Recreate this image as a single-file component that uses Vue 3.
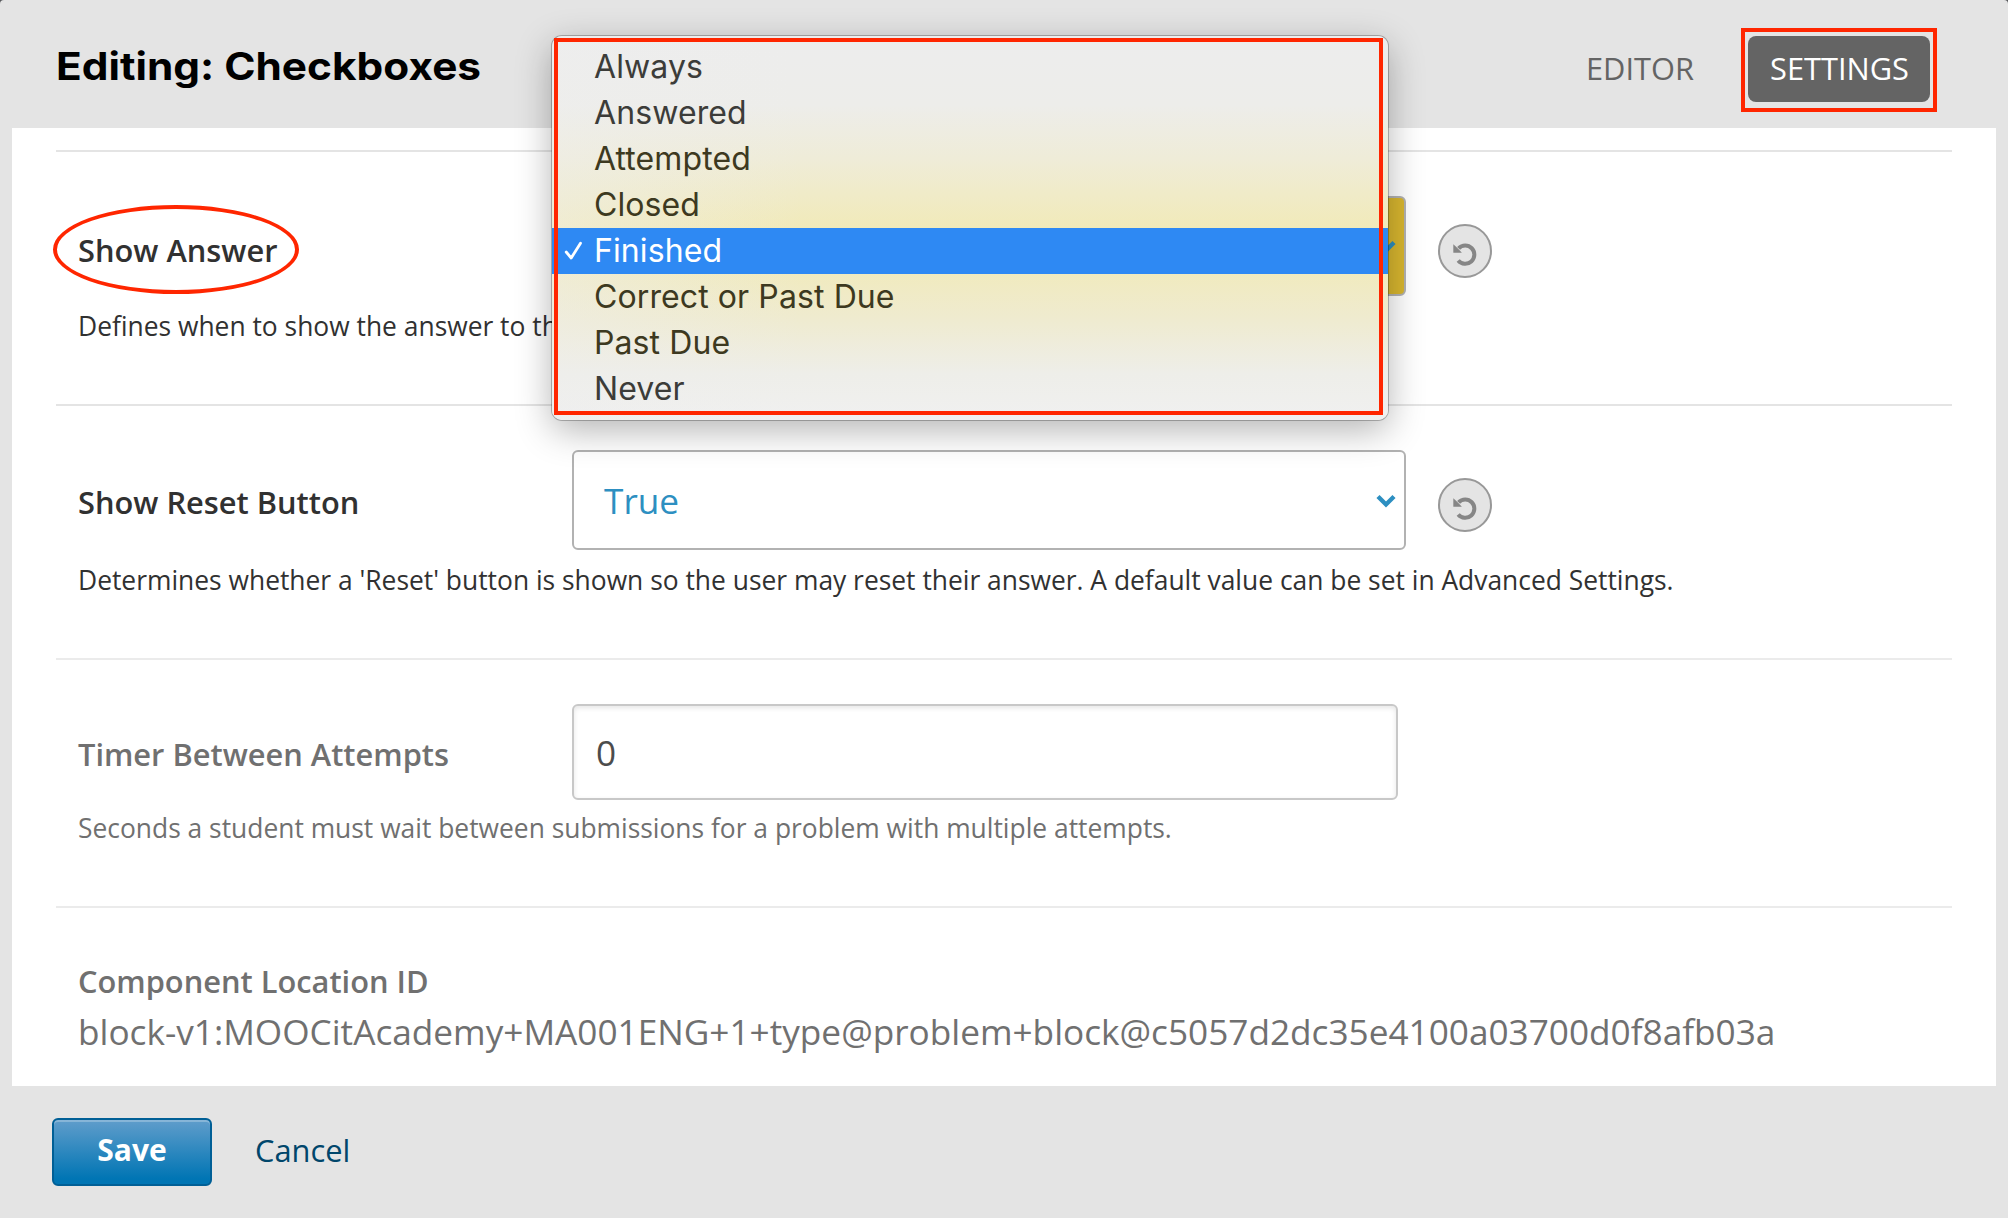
<script setup>
const options = ['Always', 'Answered', 'Attempted', 'Closed', 'Finished', 'Correct or Past Due', 'Past Due', 'Never']
const selected = 'Finished'
</script>

<template>
  <div class="modal">
    <header class="modal-header">
      <h2 class="title">Editing: Checkboxes</h2>
      <nav class="modes">
        <a class="mode">EDITOR</a>
        <a class="mode active">SETTINGS</a>
      </nav>
      <div class="mark-settings"></div>
    </header>

    <main class="panel">
      <section class="row set first">
        <div class="line">
          <label class="label">Show Answer</label>
          <div class="select changed">
            <svg class="chevron" viewBox="0 0 20 14"><path d="M2 2.5 10 10.5 18 2.5" /></svg>
          </div>
          <button class="reset"><svg viewBox="0 0 54 54"><path class="arc" d="M20.6 24.4A9.1 9.1 0 1 1 20.2 36.4" /><path class="head" d="M15.3 20.2V28.7H23.9L21.3 26 17.8 22.6Z" /></svg></button>
        </div>
        <p class="help">Defines when to show the answer to the</p>
        <div class="ring"></div>
        <ul class="menu">
          <li v-for="o in options" :key="o" :class="{ on: o === selected }">
            <svg v-if="o === selected" class="check" viewBox="0 0 20 20"><path d="M2.2 11 7.2 17 16.5 2.2" /></svg>{{ o }}
          </li>
        </ul>
      </section>

      <section class="row set second">
        <div class="line">
          <label class="label">Show Reset Button</label>
          <div class="select">
            <span>True</span>
            <svg class="chevron" viewBox="0 0 20 14"><path d="M2 2.5 10 10.5 18 2.5" /></svg>
          </div>
          <button class="reset"><svg viewBox="0 0 54 54"><path class="arc" d="M20.6 24.4A9.1 9.1 0 1 1 20.2 36.4" /><path class="head" d="M15.3 20.2V28.7H23.9L21.3 26 17.8 22.6Z" /></svg></button>
        </div>
        <p class="help">Determines whether a 'Reset' button is shown so the user may reset their answer. A default value can be set in Advanced Settings.</p>
      </section>

      <section class="row third">
        <div class="line">
          <label class="label">Timer Between Attempts</label>
          <div class="input">0</div>
        </div>
        <p class="help">Seconds a student must wait between submissions for a problem with multiple attempts.</p>
      </section>

      <section class="row location">
        <h4 class="label">Component Location ID</h4>
        <p class="locator">block-v1:MOOCitAcademy+MA001ENG+1+type@problem+block@c5057d2dc35e4100a03700d0f8afb03a</p>
      </section>
    </main>

    <footer class="actions">
      <button class="save">Save</button>
      <a class="cancel">Cancel</a>
    </footer>
  </div>
</template>

<style>
body { margin: 0; background: #55565a; }
</style>

<style scoped>
* { box-sizing: border-box; margin: 0; padding: 0; }
.modal { width: 2008px; height: 1218px; overflow: hidden; display: flex; flex-direction: column; background: #e4e4e4; border-radius: 4px 4px 0 0; font-family: "Open Sans", sans-serif; font-size: 30.8px; color: #707070; }
.modal-header { position: relative; height: 128px; flex: none; display: flex; justify-content: space-between; padding: 36px 78px 0 56px; }
.title { font: 700 38.5px/60px Inter, sans-serif; color: #000; white-space: nowrap; transform: scaleX(1.1); transform-origin: 0 0; }
.modes { display: flex; gap: 32px; line-height: 64px; }
.mode { height: 66px; padding: 0 22px; color: #646464; border-radius: 8px; }
.mode.active { width: 182px; background: #646464; color: #fff; }
.mark-settings { position: absolute; border: 4px solid #ff2600; left: 1741px; top: 28px; width: 196px; height: 84px; }
.panel { height: 958px; flex: none; margin: 0 12px; padding: 22px 44px 0; background: #fff; }
.row { position: relative; height: 254px; border-top: 2px solid #ebebeb; padding: 44px 22px 0; white-space: nowrap; }
.set { color: #313131; }
.first, .second { border-color: #e4e4e4; }
.third { height: 248px; }
.line { display: flex; align-items: center; height: 100px; }
.third .line { height: 96px; }
.label { width: 494px; font-size: 30.8px; font-weight: 600; line-height: 44px; padding-top: 3px; }
.first .label { padding-top: 8px; }
.help { font-size: 26.4px; line-height: 40px; margin-top: 10px; }
.third .help { margin-top: 8px; }
.select { position: relative; width: 834px; height: 100px; border: 2px solid #b2b2b2; border-radius: 6px; background: #fff; color: #2d8fc1; font-size: 35.2px; line-height: 97px; padding-left: 30px; }
.changed { background: #d9b72f; }
.chevron { position: absolute; right: 8px; top: 42px; width: 20px; height: 14px; fill: none; stroke: #2d8fc1; stroke-width: 4.4; }
.reset { width: 54px; height: 54px; margin: 10px 0 0 32px; border: 2px solid #989898; border-radius: 50%; background: #e4e4e4; }
.reset svg { display: block; width: 54px; height: 54px; margin: -2px; }
.arc { fill: none; stroke: #868686; stroke-width: 4; }
.head { fill: #868686; }
.input { width: 826px; height: 96px; border: 2px solid #c8c8c8; border-radius: 6px; box-shadow: inset 0 2px 5px rgba(0,0,0,.1); color: #4c4c4c; font-size: 35.2px; line-height: 93px; padding-left: 22px; }
.location { padding-top: 51px; }
.location .label { padding: 0; line-height: 45px; }
.locator { font-size: 35.2px; line-height: 54px; }
.ring { position: absolute; left: -3px; top: 53px; width: 246px; height: 89px; border: 4px solid #ff2600; border-radius: 50%; z-index: 2; }
.menu { position: absolute; left: 496px; top: -116px; width: 836px; height: 384px; padding: 8px 0; list-style: none; z-index: 3; border-radius: 10px; font: 32px/45px Inter, sans-serif; color: #3c3c39;
  background: linear-gradient(90deg, rgba(238,238,238,.45), rgba(238,238,238,0) 30%), linear-gradient(#ededed 0, #ededea 18%, #efecd8 32%, #f1eab9 50%, #f1eab9 58%, #efebd0 74%, #eeeee9 88%, #f0f0f0 100%);
  box-shadow: 0 0 0 1px rgba(0,0,0,.25), 0 10px 36px rgba(0,0,0,.3); }
.menu::after { content: ""; box-sizing: border-box; position: absolute; left: 2px; top: 2px; width: 829px; height: 377px; border: 4px solid #ff2600; }
.menu li { position: relative; height: 46px; padding-left: 42px; letter-spacing: .1px; }
.menu li:nth-child(n+3):nth-child(-n+7) { color: #3d3920; }
.menu li.on { background: #2e89f3; color: #fff !important; }
.check { position: absolute; left: 12px; top: 13px; width: 20px; height: 20px; fill: none; stroke: #fff; stroke-width: 2.8; stroke-linecap: round; stroke-linejoin: round; }
.actions { display: flex; padding: 32px 0 0 52px; }
.save { width: 160px; height: 68px; border: 2px solid #005f96; border-radius: 6px; background: linear-gradient(#609dcb, #0075b4 92%); box-shadow: inset 0 2px 0 rgba(255,255,255,.25); color: #fff; font: 700 30px/60px "Open Sans", sans-serif; padding-bottom: 4px; }
.cancel { margin-left: 43px; line-height: 64px; color: #00466b; }
</style>
